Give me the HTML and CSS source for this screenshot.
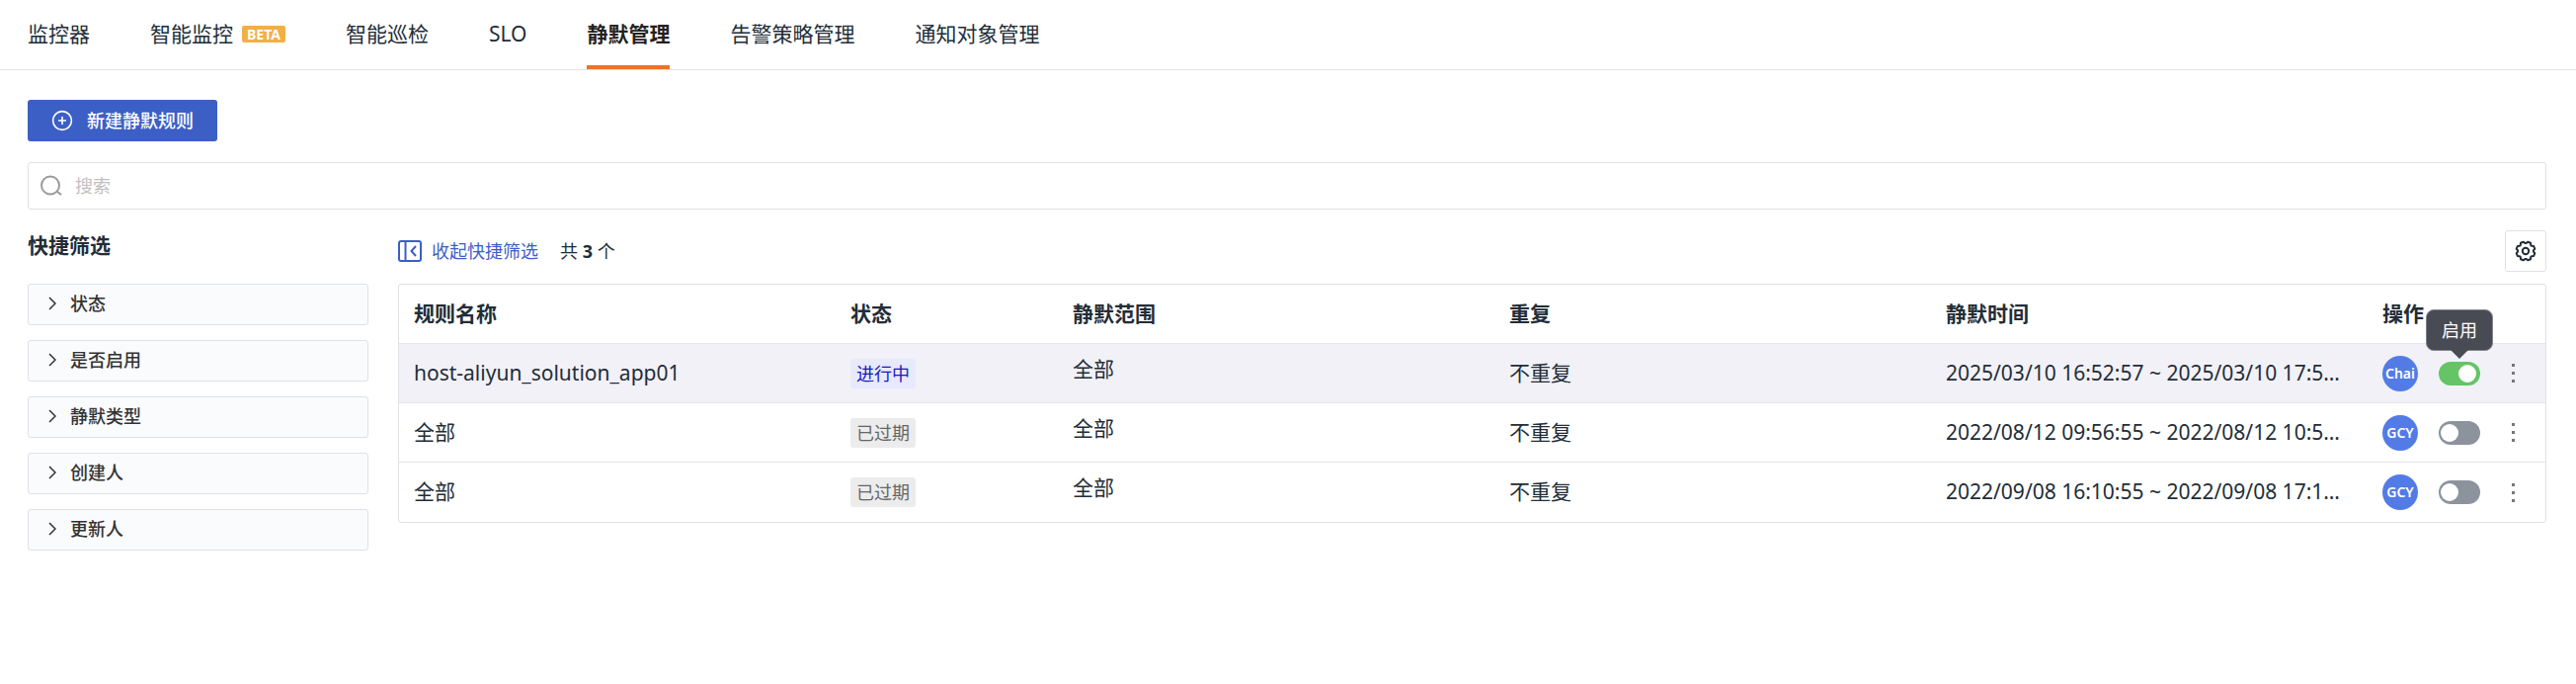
FILE: index.html
```html
<!DOCTYPE html>
<html lang="zh-CN">
<head>
<meta charset="utf-8">
<title>静默管理</title>
<link rel="stylesheet" href="styles.css">
</head>
<body>
<nav class="tabs">
  <a class="tab" href="#">监控器</a>
  <a class="tab" href="#">智能监控<span class="beta">BETA</span></a>
  <a class="tab" href="#">智能巡检</a>
  <a class="tab" href="#">SLO</a>
  <a class="tab active" href="#" aria-current="page">静默管理</a>
  <a class="tab" href="#">告警策略管理</a>
  <a class="tab" href="#">通知对象管理</a>
</nav>
<main class="page">
  <button class="create" type="button">
    <svg class="icon" width="22" height="22" viewBox="0 0 22 22" fill="none" stroke="currentColor" stroke-width="1.6"><circle cx="11" cy="11" r="9.4"/><path d="M11 7v8M7 11h8"/></svg>
    新建静默规则
  </button>
  <label class="search">
    <svg class="icon" width="24" height="24" viewBox="0 0 24 24" fill="none" stroke="currentColor" stroke-width="2"><circle cx="11" cy="11.500" r="9"/><path d="M17.500 17.500l4.500 3.500"/></svg>
    <input type="text" placeholder="搜索" aria-label="搜索">
  </label>
  <div class="content">
    <aside class="filters">
      <h2 class="filters-title">快捷筛选</h2>
      <button class="filter" type="button"><svg class="chevron" width="8" height="14" viewBox="0 0 8 14"><path d="M1 1l6 6-6 6"/></svg>状态</button>
      <button class="filter" type="button"><svg class="chevron" width="8" height="14" viewBox="0 0 8 14"><path d="M1 1l6 6-6 6"/></svg>是否启用</button>
      <button class="filter" type="button"><svg class="chevron" width="8" height="14" viewBox="0 0 8 14"><path d="M1 1l6 6-6 6"/></svg>静默类型</button>
      <button class="filter" type="button"><svg class="chevron" width="8" height="14" viewBox="0 0 8 14"><path d="M1 1l6 6-6 6"/></svg>创建人</button>
      <button class="filter" type="button"><svg class="chevron" width="8" height="14" viewBox="0 0 8 14"><path d="M1 1l6 6-6 6"/></svg>更新人</button>
    </aside>
    <section class="rules">
      <div class="toolbar">
        <button class="collapse" type="button">
          <svg class="icon" width="24" height="22" viewBox="0 0 24 22" fill="none" stroke="currentColor" stroke-width="2"><rect x="1" y="1" width="22" height="20" rx="2"/><path d="M7.500 1v20M18 6L13.500 11l4.500 5"/></svg>
          收起快捷筛选
        </button>
        <span class="count">共 <b>3</b> 个</span>
        <button class="settings" type="button" aria-label="设置">
          <svg class="icon" width="24" height="24" viewBox="0 0 24 24" fill="none" stroke="currentColor" stroke-width="2" stroke-linejoin="round"><circle cx="12" cy="12" r="3.200"/><path d="M12.600 4.100L14.200 2.700 17 3.800 17.200 6 18 6.800 20.200 7 21.300 9.800 19.900 11.400 19.900 12.600 21.300 14.200 20.200 17 18 17.200 17.200 18 17 20.200 14.200 21.300 12.600 19.900 11.400 19.900 9.800 21.300 7 20.200 6.800 18 6 17.200 3.800 17 2.700 14.200 4.100 12.600 4.100 11.400 2.700 9.800 3.800 7 6 6.800 6.800 6 7 3.800 9.800 2.700 11.400 4.100z"/></svg>
        </button>
      </div>
      <div class="table-box">
        <table class="table">
          <colgroup><col><col class="col-status"><col><col><col><col class="col-actions"></colgroup>
          <thead>
            <tr><th>规则名称</th><th>状态</th><th>静默范围</th><th>重复</th><th>静默时间</th><th>操作</th></tr>
          </thead>
          <tbody>
            <tr class="hovered">
              <td>host-aliyun_solution_app01</td>
              <td><span class="tag running">进行中</span></td>
              <td class="scope">全部</td>
              <td>不重复</td>
              <td class="time">2025/03/10 16:52:57 ~ 2025/03/10 17:52:57</td>
              <td class="actions-cell"><div class="actions">
                <span class="avatar">Chai</span>
                <span class="switch-wrap"><input class="switch" type="checkbox" role="switch" aria-label="启用" checked><span class="tooltip" role="tooltip">启用</span></span>
                <button class="more" type="button" aria-label="更多"><i></i><i></i><i></i></button>
              </div></td>
            </tr>
            <tr>
              <td>全部</td>
              <td><span class="tag">已过期</span></td>
              <td class="scope">全部</td>
              <td>不重复</td>
              <td class="time">2022/08/12 09:56:55 ~ 2022/08/12 10:56:55</td>
              <td class="actions-cell"><div class="actions">
                <span class="avatar">GCY</span>
                <span class="switch-wrap"><input class="switch" type="checkbox" role="switch" aria-label="启用"></span>
                <button class="more" type="button" aria-label="更多"><i></i><i></i><i></i></button>
              </div></td>
            </tr>
            <tr>
              <td>全部</td>
              <td><span class="tag">已过期</span></td>
              <td class="scope">全部</td>
              <td>不重复</td>
              <td class="time">2022/09/08 16:10:55 ~ 2022/09/08 17:10:55</td>
              <td class="actions-cell"><div class="actions">
                <span class="avatar">GCY</span>
                <span class="switch-wrap"><input class="switch" type="checkbox" role="switch" aria-label="启用"></span>
                <button class="more" type="button" aria-label="更多"><i></i><i></i><i></i></button>
              </div></td>
            </tr>
          </tbody>
        </table>
      </div>
    </section>
  </div>
</main>
</body>
</html>
```
FILE: styles.css
```css
* { box-sizing: border-box; }
body {
  margin: 0;
  background: #fff;
  color: #222d37;
  font: 21px/30px "Noto Sans", "Noto Sans CJK SC", sans-serif;
}
button {
  margin: 0;
  padding: 0;
  border: 0;
  background: none;
  color: inherit;
  font: inherit;
  font-size: 18px;
  cursor: pointer;
}
.icon, .chevron { display: block; flex: none; }

.tabs {
  display: flex;
  gap: 61px;
  padding: 0 28px;
  border-bottom: 1px solid #dfe1e6;
}
.tab {
  display: flex;
  align-items: center;
  height: 70px;
  border-top: 2px solid transparent;
  border-bottom: 4px solid transparent;
  color: inherit;
  text-decoration: none;
  white-space: nowrap;
}
.tab.active {
  border-bottom-color: #ee712c;
  color: #222;
  font-weight: 700;
}
.beta {
  margin-left: 9px;
  padding: 0 5px;
  border-radius: 2px;
  background: #f2b044;
  color: #fff;
  font-size: 14px;
  font-weight: 700;
  line-height: 17px;
}

.page {
  display: flex;
  flex-direction: column;
  gap: 21px;
  padding: 30px 30px 30px 28px;
}
.create {
  display: flex;
  align-items: center;
  align-self: flex-start;
  gap: 14px;
  height: 42px;
  padding: 0 24px;
  border-radius: 3px;
  background: #3c5fc6;
  color: #fff;
  font-weight: 500;
}
.search {
  display: flex;
  align-items: center;
  gap: 12px;
  height: 48px;
  padding: 0 11px;
  border: 1px solid #dfe1e6;
  border-radius: 3px;
  color: #999;
}
.search input {
  flex: 1;
  padding: 0;
  border: 0;
  outline: 0;
  background: none;
  color: #222d37;
  font: inherit;
  font-size: 18px;
}
.search input::placeholder { color: #bfbfbf; }

.content {
  display: grid;
  grid-template-columns: 345px minmax(0, 1fr);
  gap: 30px;
}
.filters {
  display: flex;
  flex-direction: column;
  gap: 15px;
}
.filters-title {
  margin: 0 0 9px;
  font-size: 21px;
  font-weight: 700;
  line-height: 30px;
}
.filter {
  display: flex;
  align-items: center;
  gap: 14px;
  height: 42px;
  padding: 0 20px 2px;
  border: 1px solid #dfe1e6;
  border-radius: 3px;
  background: #fafbfd;
  color: #333;
  font-weight: 500;
}
.chevron {
  fill: none;
  stroke: #333;
  stroke-width: 1.5;
}

.toolbar {
  display: flex;
  align-items: center;
  height: 42px;
  margin-bottom: 12px;
  font-size: 18px;
}
.collapse {
  display: flex;
  align-items: center;
  gap: 10px;
  color: #3c5fc6;
}
.count { margin-left: 22px; }
.settings {
  display: grid;
  place-items: center;
  width: 42px;
  height: 42px;
  margin-left: auto;
  border: 1px solid #dfe1e6;
  border-radius: 3px;
}

.table-box {
  border: 1px solid #dfe1e6;
  border-radius: 3px;
}
.table {
  width: 100%;
  table-layout: fixed;
  border-collapse: separate;
  border-spacing: 0;
}
.col-status { width: 225px; }
.col-actions { width: 180px; }
.table th, .table td {
  height: 60px;
  padding: 0 15px 2px;
  border-bottom: 1px solid #e4e6ea;
  text-align: left;
  white-space: nowrap;
}
.table th { font-weight: 700; }
.table tr:last-child td { border-bottom: 0; }
.hovered td { background: #f2f1f7; }
.table .scope { padding-bottom: 10px; }
.table .actions-cell { padding-bottom: 0; }
.table .time {
  padding-right: 20px;
  overflow: hidden;
  text-overflow: ellipsis;
}
.tag {
  display: inline-block;
  padding: 0 6px;
  border-radius: 3px;
  background: #ececec;
  color: #666;
  font-size: 18px;
  vertical-align: middle;
}
.tag.running {
  background: #e8e9fd;
  color: #1a1abf;
}

.actions {
  display: flex;
  align-items: center;
}
.avatar {
  width: 36px;
  height: 36px;
  border-radius: 50%;
  background: #527be6;
  color: #fff;
  font-size: 14px;
  font-weight: 600;
  line-height: 36px;
  text-align: center;
}
.switch-wrap {
  position: relative;
  display: flex;
  margin-left: 21px;
}
.switch {
  appearance: none;
  width: 42px;
  height: 24px;
  margin: 0;
  padding: 3px 2px;
  border-radius: 12px;
  background: #8d939d;
  cursor: pointer;
}
.switch::before {
  content: "";
  display: block;
  width: 18px;
  height: 18px;
  border-radius: 50%;
  background: #fff;
}
.switch:checked { background: #64c466; }
.switch:checked { padding-right: 4px; }
.switch:checked::before { margin-left: auto; }
.tooltip {
  position: absolute;
  bottom: 35px;
  left: 50%;
  width: 68px;
  height: 42px;
  margin-left: -34px;
  border: 1px solid #83858b;
  border-radius: 8px;
  background: #484b54;
  color: #fff;
  font-size: 18px;
  line-height: 40px;
  text-align: center;
}
.tooltip::after {
  content: "";
  position: absolute;
  top: 100%;
  left: 50%;
  margin-left: -9px;
  border: 9px solid transparent;
  border-top-color: #484b54;
  border-bottom: 0;
}
.more {
  display: flex;
  flex-direction: column;
  align-items: center;
  gap: 5px;
  width: 18px;
  margin-left: 24px;
}
.more i {
  width: 3px;
  height: 3px;
  background: #777;
}
```
